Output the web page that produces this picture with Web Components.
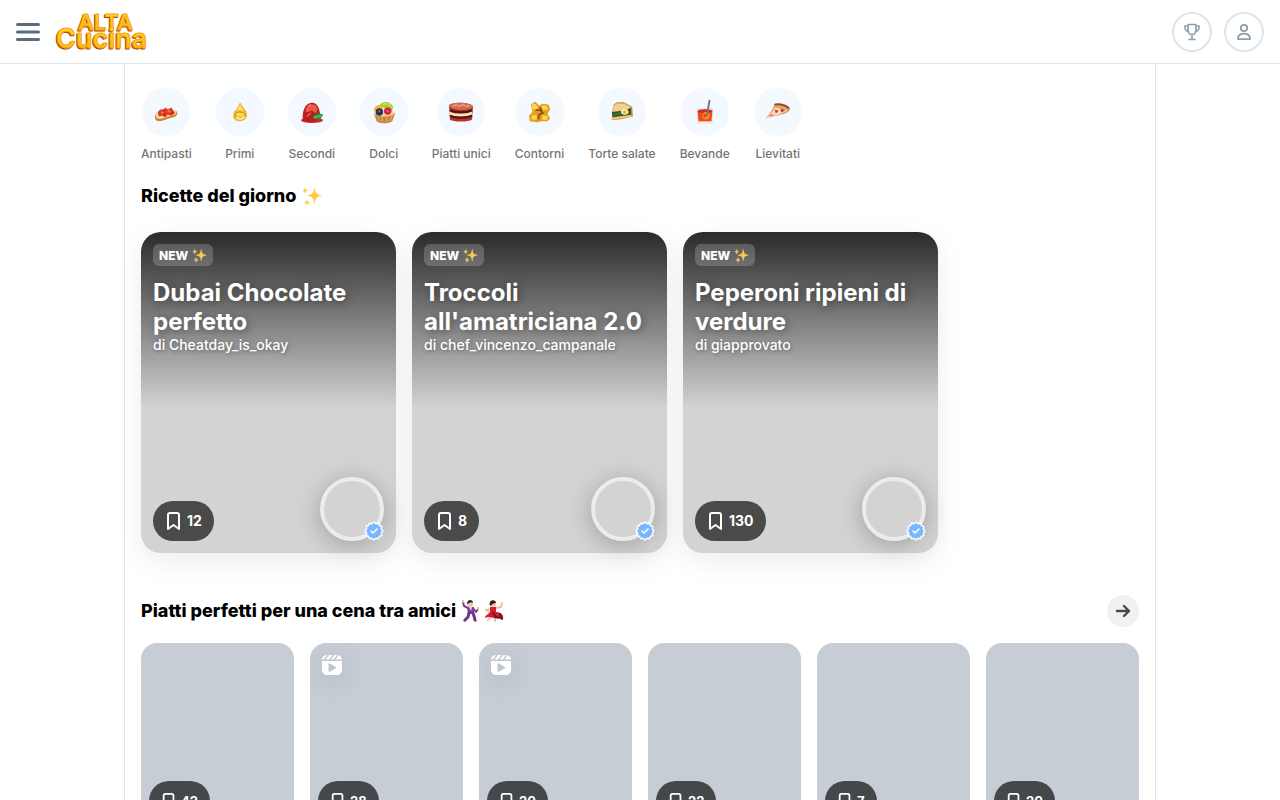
<!DOCTYPE html>
<html lang="it">
<head>
    <meta charset="UTF-8">
    <meta name="viewport" content="width=device-width, initial-scale=1.0">
    <title>AltaCucina</title>
    <style>
        html {
            scrollbar-width: none;
        }

        body {
            margin: 0;
            background: #fff;
            color: #000;
            font-family: Inter, "Liberation Sans", sans-serif;
        }

        main {
            box-sizing: border-box;
            max-width: 1032px;
            margin: 0 auto;
            padding: 24px 16px 40px;
            border: solid #dce5ec;
            border-width: 0 1px;
        }
    </style>
</head>
<body>
    <site-header></site-header>
    <main>
        <category-nav>
            <category-item label="Antipasti" icon="antipasti"></category-item>
            <category-item label="Primi" icon="primi"></category-item>
            <category-item label="Secondi" icon="secondi"></category-item>
            <category-item label="Dolci" icon="dolci"></category-item>
            <category-item label="Piatti unici" icon="piatti"></category-item>
            <category-item label="Contorni" icon="contorni"></category-item>
            <category-item label="Torte salate" icon="torte"></category-item>
            <category-item label="Bevande" icon="bevande"></category-item>
            <category-item label="Lievitati" icon="lievitati"></category-item>
        </category-nav>

        <recipe-section columns="255px" gap="24px">
            <span slot="title">Ricette del giorno</span>
            <emoji-icon slot="emoji" name="sparkles"></emoji-icon>
            <featured-card author="Cheatday_is_okay" saves="12">Dubai Chocolate perfetto</featured-card>
            <featured-card author="chef_vincenzo_campanale" saves="8">Troccoli all'amatriciana 2.0</featured-card>
            <featured-card author="giapprovato" saves="130">Peperoni ripieni di verdure</featured-card>
        </recipe-section>

        <recipe-section columns="minmax(0, 1fr)" gap="16px" more>
            <span slot="title">Piatti perfetti per una cena tra amici</span>
            <emoji-icon slot="emoji" name="dancers"></emoji-icon>
            <recipe-card saves="42"></recipe-card>
            <recipe-card saves="28" video></recipe-card>
            <recipe-card saves="20" video></recipe-card>
            <recipe-card saves="22"></recipe-card>
            <recipe-card saves="7"></recipe-card>
            <recipe-card saves="20"></recipe-card>
        </recipe-section>
    </main>

    <script>
        const FOOD_ICONS = {
            antipasti: `
                <path d="M1 18c0-3 4-5 10-6s12-2 14 1c1 3-1 5-5 6-6 1-9 4-15 4-3 0-4-2-4-5z" fill="#c98332"/>
                <path d="M2 17c0-3 5-4 9-5s12-2 13 1c1 2-2 4-6 4-5 1-8 4-13 3-2 0-3-1-3-3z" fill="#f8dfae"/>
                <path d="M4 13l3-3 3 1 2-3 3 2 4-2 2 4 2 2-4 3-4-1-3 3-3-2-4 1z" fill="#e23a24"/>
                <path d="M7 14l2-2 2 3zM14 12l3-2 1 4z" fill="#ff7356"/>
                <path d="M9 10l3 2M18 15l3-2M11 17l1-3" stroke="#a91914" fill="none"/>`,
            primi: `
                <path d="M13 3c1 0 3 5 5 7 4 3 4 13-5 13S4 15 8 11c3-2 4-8 5-8z" fill="#eeb62b"/>
                <path d="M13 4c1 4 3 6 4 9-3-3-6-2-8 0 1-3 3-4 4-9z" fill="#ffe17b"/>
                <ellipse cx="13" cy="16" rx="5" ry="3" fill="#f9d65c" stroke="#c98818"/>
                <path d="M9 19c3 2 6 2 9-1" fill="none" stroke="#fff0a0" stroke-width="2"/>`,
            secondi: `
                <ellipse cx="13" cy="22" rx="12" ry="3" fill="#d82224"/>
                <path d="M3 21C2 10 7 3 13 3c7 0 9 9 9 17-4 4-14 5-19 1z" fill="#b91e20"/>
                <path d="M6 10c2-5 7-7 11-4 3 3 2 6 0 8-3 0-3-4-6-2-2 1-5 3-5-2z" fill="#e75b4b"/>
                <path d="M9 7l3-2M7 18l5-4" stroke="#ff9a88"/>
                <path d="M14 19c3-5 7-5 11-3-2 5-7 7-11 3z" fill="#219447"/>
                <path d="M15 19l8-2" stroke="#83cf5a"/>`,
            dolci: `
                <path d="M2 14h23l-3 9c-4 3-14 3-17 0z" fill="#c98343"/>
                <path d="M6 17l2 6m3-6v7m5-7v7m6-7l-3 6" stroke="#e9b46c"/>
                <ellipse cx="13" cy="14" rx="11" ry="4" fill="#f8d68a"/>
                <path d="M8 6c3-6 13-5 15 2l-2 5z" fill="#a9cc36"/><path d="M12 5c3-2 7-1 9 3" stroke="#d9e780"/>
                <path d="M2 12c0-5 4-8 9-6l1 7z" fill="#f1b62a"/>
                <circle cx="8" cy="13" r="4" fill="#26385f"/><circle cx="8" cy="12" r="1" fill="#7d91b5"/>
                <circle cx="17" cy="12" r="4" fill="#d91e42"/><path d="M15 11l4 2" stroke="#ff718a"/>`,
            piatti: `
                <path d="M0 6c3-4 23-4 26 1l-1 14c-4 3-20 3-24 0z" fill="#b5312b"/>
                <path d="M0 6c3-4 23-4 26 1-2 5-24 5-26-1z" fill="#cf6d57"/>
                <path d="M0 14c6 3 19 3 25 0" fill="none" stroke="#ffe0bd" stroke-width="3"/>
                <path d="M1 11c6 3 18 3 24 0M1 17c6 3 18 3 24 0" fill="none" stroke="#4c1512" stroke-width="2"/>
                <path d="M4 7l4-2 3 2 4-2 4 2 3-1" stroke="#ffc18c" fill="none"/>`,
            contorni: `
                <path d="M3 5l5-3 4 4 4-2 6 1 2 5-3 5 3 5-3 3-7 0-4 1-8-1-1-6 4-4z" fill="#dfa01d"/>
                <path d="M4 5l4-1 3 4-3 4-4-4zM15 6l5 0 2 4-6 1zM4 17l5-1 1 5-6 0zM16 16l6 2-2 4-5-1z" fill="#ffd353"/>
                <path d="M8 11l5 0 3 3-4 2-1 5M13 8l2 4" fill="none" stroke="#955010" stroke-width="2"/>`,
            torte: `
                <path d="M2 13l2-8c3-4 7-2 10-3l10 5 1 11-14 3-9 1z" fill="#d6a253"/>
                <path d="M4 7c3-5 8-2 11-3l8 4-4 3-16 2z" fill="#f0d08c"/>
                <path d="M2 13l15-2 6-3v9L3 20z" fill="#315a2e"/>
                <path d="M4 17l6-3 2 3" stroke="#587b3a" fill="none"/>
                <ellipse cx="16" cy="13" rx="4" ry="3" fill="#fff1c7"/><circle cx="16" cy="13" r="2" fill="#f4b221"/>
                <path d="M2 20l21-3" stroke="#f1c778" stroke-width="2"/>`,
            bevande: `
                <path d="M4 9h18l-1 17H5z" fill="#e4dfda"/>
                <path d="M5 12h16l-1 11H6z" fill="#ed4c1d"/>
                <ellipse cx="13" cy="12" rx="8" ry="2" fill="#bc3420"/>
                <circle cx="14" cy="17" r="4" fill="#ff8b25"/><circle cx="13" cy="17" r="2" fill="#e9471d"/>
                <path d="M18 0l-3 17" stroke="#737579" stroke-width="2"/>
                <path d="M6 25h14" stroke="#fff"/>`,
            lievitati: `
                <path d="M-1 20C4 16 8 8 10 4c6-1 14 1 16 5 1 3-4 6-10 7z" fill="#e5a36b"/>
                <path d="M-1 20c7-4 8-8 11-12l13 3-7 4z" fill="#f8ddc6"/>
                <path d="M9 5c5-1 12 0 16 4" stroke="#8b4c31" stroke-width="2" fill="none"/>
                <path d="M10 11l3 1-2 2zM16 10l4 1-3 2zM4 17l4-1" fill="#cc3e29" stroke="#cc3e29"/>`
        };

        class SiteHeader extends HTMLElement {
            constructor() {
                super();
                this.attachShadow({ mode: 'open' });
            }

            connectedCallback() {
                this.shadowRoot.innerHTML = `
                    <style>
                        :host {
                            display: block;
                        }

                        header {
                            box-sizing: border-box;
                            display: flex;
                            align-items: center;
                            justify-content: space-between;
                            height: 64px;
                            padding: 0 16px;
                            border-bottom: 1px solid #dce5ec;
                        }

                        .brand, .actions {
                            display: flex;
                            align-items: center;
                        }

                        .brand {
                            gap: 16px;
                        }

                        .actions {
                            gap: 12px;
                        }

                        button {
                            display: grid;
                            place-items: center;
                            padding: 0;
                            background: none;
                            border: 0;
                            cursor: pointer;
                        }

                        .round {
                            box-sizing: border-box;
                            width: 40px;
                            height: 40px;
                            border: 2px solid #dce6ee;
                            border-radius: 50%;
                            color: #8c9eab;
                        }

                        svg {
                            display: block;
                            fill: none;
                        }

                        .logo {
                            overflow: visible;
                        }

                        .logo text {
                            font-family: Inter, sans-serif;
                            font-weight: 600;
                            stroke-linejoin: round;
                        }
                    </style>
                    <header>
                        <div class="brand">
                            <button type="button" aria-label="Menu">
                                <svg width="24" height="24" stroke="#5b6b7a" stroke-width="3" stroke-linecap="round">
                                    <path d="M1.5 4.5h21M1.5 12h21M1.5 19.5h21"/>
                                </svg>
                            </button>
                            <a href="#" aria-label="AltaCucina">
                                <svg class="logo" width="88" height="40" viewBox="0 0 88 40">
                                    <defs>
                                        <linearGradient id="gold" x1="0" y1="0" x2="0" y2="1">
                                            <stop offset="0.2" stop-color="#ffd526"/>
                                            <stop offset="1" stop-color="#ffb30c"/>
                                        </linearGradient>
                                    </defs>
                                    <g fill="#a9480b" stroke="#a9480b" aria-hidden="true">
                                        <use href="#alta" x="-1" y="1"/>
                                        <use href="#cucina" x="-1" y="1"/>
                                    </g>
                                    <g fill="url(#gold)" stroke="#fba40f">
                                        <text id="alta" x="22" y="18" font-size="22">ALTA</text>
                                        <text id="cucina" x="0" y="36" font-size="27">Cucina</text>
                                    </g>
                                </svg>
                            </a>
                        </div>
                        <div class="actions">
                            <button type="button" class="round" aria-label="Classifica">
                                <svg width="20" height="20" viewBox="0 0 20 20" stroke="currentColor" stroke-width="1.6" stroke-linecap="round" stroke-linejoin="round">
                                    <path d="M6 2.5h8v5c0 3-1.5 5-4 5s-4-2-4-5zM10 12.5v5M7 17.5h6M6 4H3c-.5 3 .8 5 3.500 5.500M14 4h3c.5 3-.8 5-3.500 5.500"/>
                                </svg>
                            </button>
                            <button type="button" class="round" aria-label="Profilo">
                                <svg width="20" height="20" viewBox="0 0 20 20" stroke="currentColor" stroke-width="1.8" stroke-linejoin="round">
                                    <circle cx="10" cy="6" r="3.2"/>
                                    <path d="M4.5 17.2h11c.5 0 .7-.3.6-.8-.5-3-2.600-4.700-6.100-4.700s-5.600 1.700-6.100 4.700c-.1.5.1.8.6.8z"/>
                                </svg>
                            </button>
                        </div>
                    </header>
                `;
            }
        }

        class CategoryNav extends HTMLElement {
            constructor() {
                super();
                this.attachShadow({ mode: 'open' });
            }

            connectedCallback() {
                this.shadowRoot.innerHTML = `
                    <style>
                        :host {
                            display: block;
                        }

                        nav {
                            display: flex;
                            gap: 24px;
                        }
                    </style>
                    <nav aria-label="Categorie"><slot></slot></nav>
                `;
            }
        }

        class CategoryItem extends HTMLElement {
            constructor() {
                super();
                this.attachShadow({ mode: 'open' });
            }

            connectedCallback() {
                const label = this.getAttribute('label') || '';
                const icon = FOOD_ICONS[this.getAttribute('icon')] || '';

                this.shadowRoot.innerHTML = `
                    <style>
                        :host {
                            display: block;
                            flex: none;
                        }

                        a {
                            display: flex;
                            flex-direction: column;
                            align-items: center;
                            gap: 8px;
                            color: #757575;
                            font-size: 12px;
                            font-weight: 500;
                            line-height: 20px;
                            text-decoration: none;
                        }

                        .circle {
                            display: grid;
                            place-items: center;
                            width: 48px;
                            height: 48px;
                            border-radius: 50%;
                            background: #f3f9fe;
                        }

                        svg {
                            overflow: visible;
                        }
                    </style>
                    <a href="#">
                        <span class="circle">
                            <svg width="24" height="24" viewBox="0 0 26 26" fill="none" aria-hidden="true">${icon}</svg>
                        </span>
                        <span>${label}</span>
                    </a>
                `;
            }
        }

        class EmojiIcon extends HTMLElement {
            constructor() {
                super();
                this.attachShadow({ mode: 'open' });
            }

            connectedCallback() {
                const sparkles = `
                    <svg viewBox="0 0 22 22" role="img" aria-label="✨">
                        <g fill="#ffca35" stroke="#ffe399" stroke-width=".5">
                            <path d="M13.500 2c.8 6 2 7.500 7.500 8.500-5.500 1-6.700 2.500-7.500 8.500-.8-6-2-7.500-7.500-8.500 5.500-1 6.700-2.500 7.500-8.500z"/>
                            <path d="M4 2c.3 2.300.9 3 3 3.500-2.100.5-2.700 1.200-3 3.500-.3-2.300-.9-3-3-3.500 2.100-.5 2.700-1.200 3-3.500zM6 14c.3 2.300.9 3 3 3.500-2.100.5-2.700 1.200-3 3.500-.3-2.300-.9-3-3-3.500 2.100-.5 2.700-1.200 3-3.500z"/>
                        </g>
                    </svg>`;
                const dancers = `
                    <svg viewBox="0 0 44 22" role="img" aria-label="🕺💃" fill="none" stroke-linecap="round" stroke-linejoin="round">
                        <path d="M7 8L3 6 2 2M12 8l3 4 2-3" stroke="#76419b" stroke-width="2"/>
                        <path d="M2 2V1M17 9V8M4 21H3M14 21h1" stroke="#e8b793" stroke-width="2"/>
                        <path d="M6 7h7v7H7z" fill="#76419b"/>
                        <path d="M8 13l-1 4-3 3M12 13l1 3 1 4" stroke="#683587" stroke-width="3"/>
                        <path d="M8 7l2 4 1-4z" fill="#efd2ea"/>
                        <circle cx="9" cy="4" r="3" fill="#efc4a1"/><path d="M6 4c0-5 6-5 6-1-2-1-4 0-6 1z" fill="#292525"/>
                        <path d="M30 9l-5 1 3 2M35 8l5-1 1-4M30 16l-3 4M34 17v4" stroke="#efc0a0" stroke-width="2"/>
                        <path d="M29 7h6v5c6 0 8 4 7 7-3-3-6 1-9-1-3 0-4-2-9 0 0-3 4-4 5-6z" fill="#d51c31"/>
                        <path d="M32 13l3 4 5 1M39 14l2 5" stroke="#681920" stroke-width="2"/>
                        <circle cx="32" cy="4" r="3" fill="#efc4a1"/><path d="M29 6c-2-7 6-7 6-3-3 0-3 1-6 3z" fill="#272020"/>
                    </svg>`;

                this.shadowRoot.innerHTML = `
                    <style>
                        :host {
                            display: inline-block;
                            height: var(--emoji-size, 22px);
                        }

                        svg {
                            display: block;
                            height: 100%;
                        }
                    </style>
                    ${this.getAttribute('name') === 'dancers' ? dancers : sparkles}
                `;
            }
        }

        class RecipeSection extends HTMLElement {
            constructor() {
                super();
                this.attachShadow({ mode: 'open' });
            }

            connectedCallback() {
                const more = this.hasAttribute('more');
                const columns = this.getAttribute('columns');
                const count = more ? 6 : 3;

                this.shadowRoot.innerHTML = `
                    <style>
                        :host {
                            display: block;
                            margin-top: ${more ? '42px' : '20px'};
                        }

                        .heading {
                            display: flex;
                            align-items: center;
                            justify-content: space-between;
                            margin-bottom: ${this.getAttribute('gap')};
                        }

                        h2 {
                            display: flex;
                            align-items: center;
                            gap: 5px;
                            margin: 0;
                            font-size: 18px;
                            font-weight: 800;
                            line-height: 24px;
                        }

                        button {
                            display: grid;
                            place-items: center;
                            width: 32px;
                            height: 32px;
                            padding: 0;
                            border: 0;
                            border-radius: 50%;
                            background: #f1f1f1;
                            cursor: pointer;
                        }

                        .row {
                            display: grid;
                            grid-template-columns: repeat(${count}, ${columns});
                            gap: 16px;
                        }
                    </style>
                    <section>
                        <div class="heading">
                            <h2><slot name="title"></slot><slot name="emoji"></slot></h2>
                            ${more ? `
                            <button type="button" aria-label="Vedi tutte">
                                <svg width="16" height="16" viewBox="0 0 16 16" fill="none" stroke="#4a4a4a" stroke-width="2.4" stroke-linecap="round" stroke-linejoin="round">
                                    <path d="M2 8h12M9 3l5 5-5 5"/>
                                </svg>
                            </button>` : ''}
                        </div>
                        <div class="row"><slot></slot></div>
                    </section>
                `;
            }
        }

        class SaveButton extends HTMLElement {
            constructor() {
                super();
                this.attachShadow({ mode: 'open' });
            }

            connectedCallback() {
                const small = this.hasAttribute('small');

                this.shadowRoot.innerHTML = `
                    <style>
                        :host {
                            display: block;
                        }

                        button {
                            display: flex;
                            align-items: center;
                            gap: 4px;
                            height: 40px;
                            padding: 0 12px;
                            border: 0;
                            border-radius: 20px;
                            background: rgba(0, 0, 0, 0.65);
                            color: #fff;
                            font: 700 ${small ? '13px' : '14px'}/20px Inter, "Liberation Sans", sans-serif;
                            cursor: pointer;
                        }
                    </style>
                    <button type="button">
                        <svg width="${small ? 16 : 18}" height="${small ? 18 : 20}" viewBox="0 0 18 20" fill="none" stroke="#fff" stroke-width="2" stroke-linejoin="round" aria-hidden="true">
                            <path d="M3 4c0-1.200.8-2 2-2h7c1.200 0 2 .8 2 2v14l-5.500-4L3 18z"/>
                        </svg>
                        <span><slot></slot></span>
                    </button>
                `;
            }
        }

        class FeaturedCard extends HTMLElement {
            constructor() {
                super();
                this.attachShadow({ mode: 'open' });
            }

            connectedCallback() {
                const author = this.getAttribute('author') || '';
                const saves = this.getAttribute('saves') || '0';

                // Scalloped edge of the verified seal
                const points = [];
                for (let i = 0; i < 24; i++) {
                    const r = i % 2 ? 7.6 : 9;
                    const a = i * Math.PI / 12;
                    points.push(`${(10 + r * Math.cos(a)).toFixed(1)},${(10 + r * Math.sin(a)).toFixed(1)}`);
                }

                this.shadowRoot.innerHTML = `
                    <style>
                        :host {
                            display: block;
                        }

                        article {
                            box-sizing: border-box;
                            display: flex;
                            flex-direction: column;
                            justify-content: space-between;
                            min-height: 321px;
                            padding: 12px;
                            border-radius: 20px;
                            background: linear-gradient(rgba(0, 0, 0, 0.8), transparent 55%) #d3d3d3;
                            box-shadow: 0 8px 24px rgba(80, 105, 140, 0.12);
                            color: #fff;
                        }

                        .badge {
                            --emoji-size: 15px;
                            display: flex;
                            align-items: center;
                            gap: 4px;
                            width: fit-content;
                            height: 22px;
                            padding: 0 6px;
                            border-radius: 6px;
                            background: rgba(255, 255, 255, 0.2);
                            font-size: 12px;
                            font-weight: 800;
                        }

                        h3 {
                            margin: 12px 0 0;
                            font-size: 24px;
                            font-weight: 700;
                            line-height: 29px;
                            text-shadow: 2px 2px 8px rgba(0, 0, 0, 0.4);
                        }

                        p {
                            margin: 0;
                            font-size: 14px;
                            font-weight: 500;
                            line-height: 18px;
                            text-shadow: 1px 1px 4px rgba(0, 0, 0, 0.4);
                        }

                        .bottom {
                            display: flex;
                            align-items: flex-end;
                            justify-content: space-between;
                        }

                        .avatar {
                            position: relative;
                            box-sizing: border-box;
                            width: 64px;
                            height: 64px;
                            border: 4px solid #ececec;
                            border-radius: 50%;
                            background: #d3d3d3;
                            box-shadow: 0 4px 24px rgba(0, 0, 0, 0.25);
                        }

                        .avatar svg {
                            position: absolute;
                            right: -4px;
                            bottom: -4px;
                        }
                    </style>
                    <article>
                        <div>
                            <div class="badge">NEW <emoji-icon name="sparkles"></emoji-icon></div>
                            <h3><slot></slot></h3>
                            <p>di ${author}</p>
                        </div>
                        <div class="bottom">
                            <save-button>${saves}</save-button>
                            <div class="avatar">
                                <svg width="20" height="20" viewBox="0 0 20 20" fill="none" stroke-linejoin="round" stroke-linecap="round" role="img" aria-label="Verificato">
                                    <polygon points="${points.join(' ')}" fill="#78b7ff" stroke="#fff" stroke-width="1.4"/>
                                    <path d="M7 10l2 2 4-4" stroke="#fff" stroke-width="1.6"/>
                                </svg>
                            </div>
                        </div>
                    </article>
                `;
            }
        }

        class RecipeCard extends HTMLElement {
            constructor() {
                super();
                this.attachShadow({ mode: 'open' });
            }

            connectedCallback() {
                const saves = this.getAttribute('saves') || '0';
                const video = this.hasAttribute('video');

                this.shadowRoot.innerHTML = `
                    <style>
                        :host {
                            display: block;
                        }

                        article {
                            box-sizing: border-box;
                            display: flex;
                            flex-direction: column;
                            justify-content: space-between;
                            align-items: flex-start;
                            min-height: 186px;
                            padding: 8px;
                            border-radius: 16px;
                            background: #c6cdd5;
                        }

                        .video {
                            padding: 2px;
                        }

                        .video svg {
                            display: block;
                            filter: drop-shadow(0 4px 12px rgba(0, 0, 0, 0.15));
                        }

                        save-button {
                            margin-top: auto;
                        }
                    </style>
                    <article>
                        ${video ? `
                        <div class="video">
                            <svg width="24" height="24" viewBox="0 0 24 24" fill="#fff" role="img" aria-label="Video">
                                <path fill-rule="evenodd" d="M2 8h20v8c0 4-2 6-6 6H8c-4 0-6-2-6-6zM8.500 11v7c0 .8.6 1.100 1.300.7l6-3.400c.7-.4.7-1 0-1.400l-6-3.500c-.7-.4-1.300-.1-1.300.6z"/>
                                <path d="M2 6.500C2.200 4.300 3.500 2.700 5.500 2.200H7L3.600 6.500zM9 2h3.500L9 6.500H5.500zM14.500 2H17l-3.300 4.500h-3zM18.500 2.200c2 .6 3.200 2.100 3.500 4.300h-6.500z"/>
                            </svg>
                        </div>` : ''}
                        <save-button small>${saves}</save-button>
                    </article>
                `;
            }
        }

        customElements.define('site-header', SiteHeader);
        customElements.define('category-nav', CategoryNav);
        customElements.define('category-item', CategoryItem);
        customElements.define('emoji-icon', EmojiIcon);
        customElements.define('recipe-section', RecipeSection);
        customElements.define('save-button', SaveButton);
        customElements.define('featured-card', FeaturedCard);
        customElements.define('recipe-card', RecipeCard);
    </script>
</body>
</html>
